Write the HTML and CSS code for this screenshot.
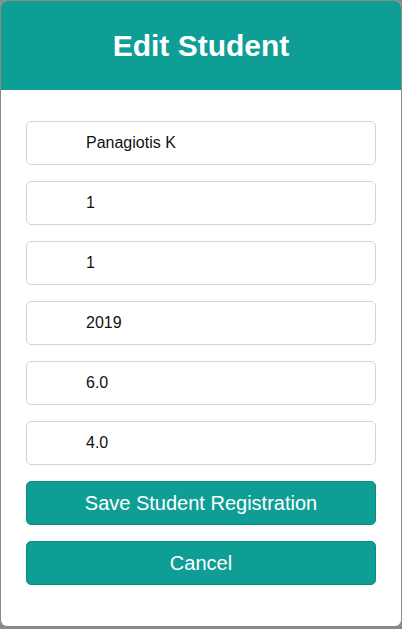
FILE: index.html
```html
<!DOCTYPE html>
<html>
<head>
<meta charset="utf-8">
<link rel="stylesheet" href="styles.css">
</head>
<body>
<div class="card">
  <div class="header"><h1>Edit Student</h1></div>
  <form class="form">
    <input class="field" type="text" value="Panagiotis K">
    <input class="field" type="text" value="1">
    <input class="field" type="text" value="1">
    <input class="field" type="text" value="2019">
    <input class="field" type="text" value="6.0">
    <input class="field" type="text" value="4.0">
    <button type="button" class="btn">Save Student Registration</button>
    <button type="button" class="btn">Cancel</button>
  </form>
</div>
</body>
</html>
```
FILE: styles.css
```css
html, body {
  margin: 0;
  padding: 0;
}
body {
  background: #8a8a86;
  font-family: "Liberation Sans", Arial, sans-serif;
  width: 402px;
  height: 629px;
  overflow: hidden;
}
.card {
  margin: 1px 1px 0 1px;
  width: 400px;
  height: 625px;
  background: #fff;
  border-radius: 6px;
  overflow: hidden;
}
.header {
  background: #0f9e96;
  height: 89px;
  display: flex;
  align-items: center;
  justify-content: center;
}
.header h1 {
  margin: 0;
  color: #fff;
  font-size: 30px;
  font-weight: bold;
}
.form {
  padding: 31px 25px 0 25px;
  display: flex;
  flex-direction: column;
  gap: 16px;
}
.field {
  box-sizing: border-box;
  height: 44px;
  width: 350px;
  border: 1px solid #d4d4d4;
  border-radius: 5px;
  padding: 0 0 0 59px;
  font-family: "Liberation Sans", Arial, sans-serif;
  font-size: 16px;
  color: #111;
  background: #fff;
  outline: none;
}
.btn {
  box-sizing: border-box;
  height: 44px;
  width: 350px;
  border: 1px solid #0c8a83;
  border-radius: 5px;
  background: #0f9e96;
  color: #fff;
  font-family: "Liberation Sans", Arial, sans-serif;
  font-size: 20px;
  cursor: pointer;
}
```
